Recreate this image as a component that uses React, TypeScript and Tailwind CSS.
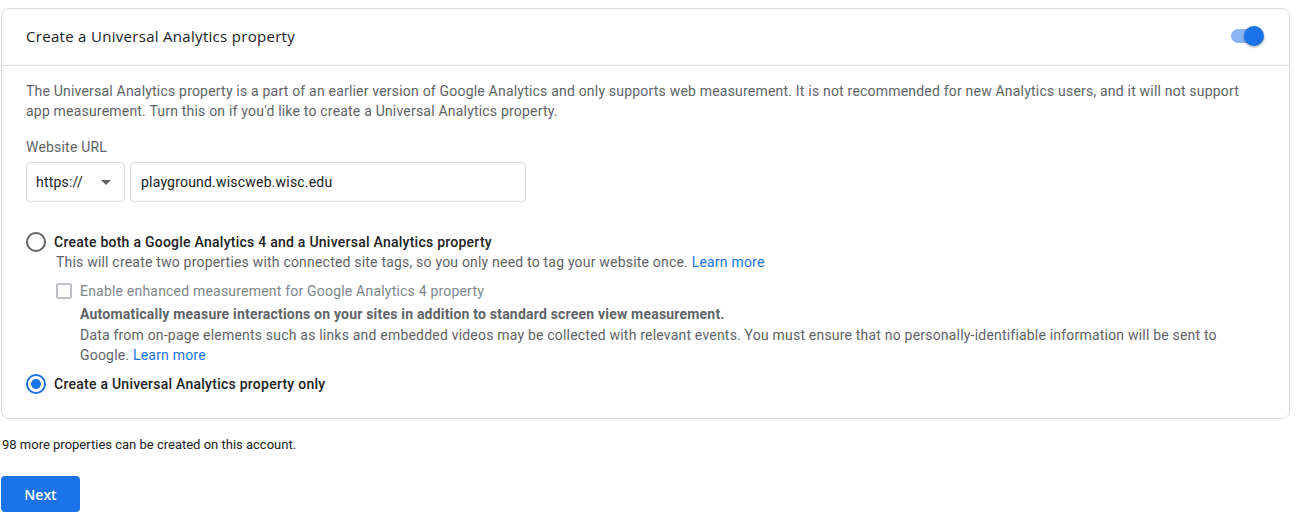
import React from "react";

export default function App() {
  return (
    <div className="w-[1298px] h-[518px] bg-white font-['Roboto',sans-serif] tracking-[0.2px] overflow-hidden">
      <div className="ml-px mt-2 w-[1289px] h-[411px] border border-[#dadce0] rounded-lg">
        <div className="h-[57px] flex items-center justify-between pl-[24px] pr-[25px] border-b border-[#dadce0]">
          <div className="text-[15px] tracking-[0.3px] text-[#202124] font-['Open_Sans',sans-serif] mt-[-1px]">Create a Universal Analytics property</div>
          <div className="relative w-[36px] h-[20px] mr-0 mt-[-2px]">
            <div className="absolute left-[3px] top-[3px] w-[30px] h-[14px] rounded-full bg-[#8ab4f8]" />
            <div className="absolute left-[16px] top-0 w-[20px] h-[20px] rounded-full bg-[#1a73e8] shadow-[0_1px_3px_rgba(0,0,0,0.4)]" />
          </div>
        </div>
        <div className="pl-[24px] pr-[25px] pt-[15px]">
          <p className="text-[14px] leading-[20px] text-[#5f6368]">
            The Universal Analytics property is a part of an earlier version of Google Analytics and only supports web measurement. It is not recommended for new Analytics users, and it will not support app measurement. Turn this on if you'd like to create a Universal Analytics property.
          </p>
          <div className="mt-[16px] text-[14px] leading-[20px] text-[#5f6368]">Website URL</div>
          <div className="mt-[5px] flex gap-[5px]">
            <div className="w-[99px] h-[40px] border border-[#dadce0] rounded flex items-center justify-between pl-[9px] pr-[13px]">
              <span className="text-[14px] text-[#202124]">https://</span>
              <svg width="10" height="5" viewBox="0 0 10 5"><path d="M0 0 L5 5 L10 0 Z" fill="#5f6368" /></svg>
            </div>
            <div className="w-[396px] h-[40px] border border-[#dadce0] rounded flex items-center pl-[10px]">
              <span className="text-[14px] text-[#202124]">playground.wiscweb.wisc.edu</span>
            </div>
          </div>
          <div className="mt-[30px] flex items-center gap-[8px]">
            <div className="w-[20px] h-[20px] rounded-full border-2 border-[#5f6368]" />
            <span className="text-[14px] leading-[20px] font-medium tracking-[0.25px] text-[#202124]">Create both a Google Analytics 4 and a Universal Analytics property</span>
          </div>
          <div className="pl-[30px]">
            <p className="text-[14px] leading-[20px] text-[#5f6368]">
              This will create two properties with connected site tags, so you only need to tag your website once. <a className="text-[#1a73e8]">Learn more</a>
            </p>
            <div className="mt-[9px] flex items-center gap-[8px]">
              <div className="w-[16px] h-[16px] border-2 border-[#bdc1c6] rounded-[2px]" />
              <span className="text-[14px] leading-[20px] text-[#80868b]">Enable enhanced measurement for Google Analytics 4 property</span>
            </div>
            <div className="pl-[24px] mt-[3px] text-[14px] leading-[20px] text-[#5f6368]">
              <p className="font-bold">Automatically measure interactions on your sites in addition to standard screen view measurement.</p>
              <p className="mt-px">Data from on-page elements such as links and embedded videos may be collected with relevant events. You must ensure that no personally-identifiable information will be sent to Google. <a className="text-[#1a73e8]">Learn more</a></p>
            </div>
          </div>
          <div className="mt-[9px] flex items-center gap-[8px]">
            <div className="w-[20px] h-[20px] rounded-full border-2 border-[#1a73e8] flex items-center justify-center">
              <div className="w-[10px] h-[10px] rounded-full bg-[#1a73e8]" />
            </div>
            <span className="text-[14px] leading-[20px] font-medium tracking-[0.25px] text-[#202124]">Create a Universal Analytics property only</span>
          </div>
        </div>
      </div>
      <div className="mt-[18px] ml-[2px] text-[13px] tracking-normal leading-[16px] text-[#202124]">98 more properties can be created on this account.</div>
      <button className="mt-[23px] ml-px w-[79px] h-[36px] rounded bg-[#1a73e8] text-white text-[14px] tracking-normal font-semibold font-['Open_Sans',sans-serif]">Next</button>
    </div>
  );
}
